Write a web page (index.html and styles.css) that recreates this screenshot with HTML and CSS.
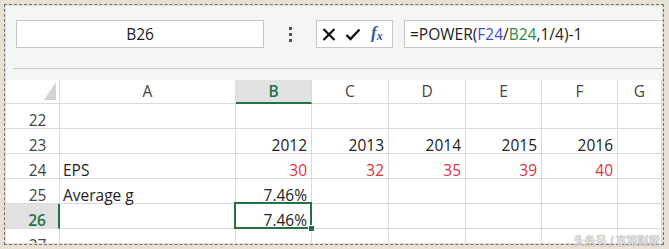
FILE: index.html
```html
<!DOCTYPE html>
<html lang="en">
<head>
    <meta charset="UTF-8">
    <title>Excel - POWER growth</title>
    <link rel="stylesheet" href="styles.css">
</head>
<body>
    <div class="frame">
        <div class="app">
            <!-- Name box + formula bar -->
            <div class="toolbar">
                <div class="name-box">B26</div>
                <div class="more"><span></span><span></span><span></span></div>
                <div class="fx-box">
                    <svg class="icon-x" width="14" height="13" viewBox="0 0 14 13">
                        <path d="M1.5 1 L12.5 12 M12.5 1 L1.5 12" stroke="#111" stroke-width="2.2" fill="none"/>
                    </svg>
                    <svg class="icon-check" width="16" height="13" viewBox="0 0 16 13">
                        <path d="M1.5 7 L5.5 11 L14.5 1.5" stroke="#111" stroke-width="2.4" fill="none"/>
                    </svg>
                    <span class="fx">f<sub>x</sub></span>
                </div>
                <div class="formula">=POWER(<span class="ref-f">F24</span>/<span class="ref-b">B24</span>,1/4)-1</div>
            </div>
            <div class="divider"></div>

            <!-- Sheet -->
            <div class="sheet">
                <div class="hd corner">
                    <svg width="12" height="18" viewBox="0 0 12 18"><polygon points="12,0 12,18 0,18" fill="#d4d4d4"/></svg>
                </div>
                <div class="hd">A</div>
                <div class="hd col-active">B</div>
                <div class="hd">C</div>
                <div class="hd">D</div>
                <div class="hd">E</div>
                <div class="hd">F</div>
                <div class="hd">G</div>

                <div class="rn">22</div>
                <div class="c"></div><div class="c"></div><div class="c"></div><div class="c"></div><div class="c"></div><div class="c"></div><div class="c"></div>

                <div class="rn">23</div>
                <div class="c"></div>
                <div class="c num">2012</div>
                <div class="c num">2013</div>
                <div class="c num">2014</div>
                <div class="c num">2015</div>
                <div class="c num">2016</div>
                <div class="c"></div>

                <div class="rn">24</div>
                <div class="c">EPS</div>
                <div class="c num red">30</div>
                <div class="c num red">32</div>
                <div class="c num red">35</div>
                <div class="c num red">39</div>
                <div class="c num red">40</div>
                <div class="c"></div>

                <div class="rn">25</div>
                <div class="c">Average g</div>
                <div class="c num">7.46%</div>
                <div class="c"></div><div class="c"></div><div class="c"></div><div class="c"></div><div class="c"></div>

                <div class="rn row-active">26</div>
                <div class="c"></div>
                <div class="c num active">7.46%</div>
                <div class="c"></div><div class="c"></div><div class="c"></div><div class="c"></div><div class="c"></div>

                <div class="rn">27</div>
                <div class="c"></div><div class="c"></div><div class="c"></div><div class="c"></div><div class="c"></div><div class="c"></div><div class="c"></div>
            </div>
        </div>
    </div>
    <div class="watermark">头条号 / 富策财税</div>
</body>
</html>
```

FILE: styles.css
```css
body {
    margin: 0;
    background-color: #e7e0d4;
    font-family: "Open Sans", "Noto Sans", sans-serif;
    position: relative;
    height: 249px;
    overflow: hidden;
}
.frame {
    margin: 4px 5px 4px 4px;
    border: 1px dashed #707070;
    padding: 1px;
}
.app {
    height: 237px;
    background-color: #f3f5f7;
    overflow: hidden;
}
.toolbar {
    height: 62px;
    box-sizing: border-box;
    padding: 14px 0 0 10px;
    display: flex;
    align-items: flex-start;
    white-space: nowrap;
}
.toolbar > div {
    flex-shrink: 0;
}
.name-box {
    width: 248px;
    height: 28px;
    box-sizing: border-box;
    border: 1px solid #c6c6c6;
    background-color: #fff;
    text-align: center;
    font-size: 15.5px;
    line-height: 26px;
    color: #222;
}
.more {
    width: 52px;
    height: 28px;
    display: flex;
    flex-direction: column;
    align-items: center;
    justify-content: center;
    gap: 3px;
}
.more span {
    width: 3px;
    height: 3px;
    background-color: #555;
}
.fx-box {
    width: 77px;
    height: 28px;
    box-sizing: border-box;
    border: 1px solid #c6c6c6;
    background-color: #fff;
    display: flex;
    align-items: center;
    padding-left: 5px;
}
.icon-x {
    margin-right: 9px;
}
.icon-check {
    margin-right: 10px;
}
.fx {
    font-family: "Liberation Serif", serif;
    font-style: italic;
    font-weight: bold;
    font-size: 17px;
    color: #3556b0;
    line-height: 20px;
}
.fx sub {
    font-size: 12px;
    vertical-align: -2px;
}
.formula {
    margin-left: 11px;
    width: 300px;
    height: 28px;
    box-sizing: border-box;
    border: 1px solid #c6c6c6;
    border-right: none;
    background-color: #fff;
    padding-left: 5px;
    font-size: 15.5px;
    line-height: 26px;
    color: #222;
}
.ref-f {
    color: #3b4fd0;
}
.ref-b {
    color: #2e8b44;
}
.divider {
    height: 11px;
    margin-left: 7px;
    border-top: 1px solid #c9c9c9;
}
.sheet {
    display: grid;
    grid-template-columns: 54px 176px 76px 77px 77px 76px 76px 1fr;
    grid-template-rows: 24px repeat(6, 25px);
    background-color: #fff;
    font-size: 15.5px;
    color: #222;
}
.hd, .rn, .c {
    box-sizing: border-box;
    border-right: 1px solid #dadada;
    border-bottom: 1px solid #dadada;
    white-space: nowrap;
}
.hd {
    text-align: center;
    line-height: 23px;
    color: #444;
}
.corner {
    display: flex;
    justify-content: flex-end;
    align-items: flex-end;
    padding: 0 3px 3px 0;
}
.corner svg {
    display: block;
}
.col-active {
    background-color: #e1e1e1;
    color: #217346;
    font-weight: 600;
    border-bottom: 2px solid #217346;
    line-height: 22px;
}
.rn {
    padding: 8px 0 0 10px;
    line-height: 16px;
    text-align: center;
    color: #444;
}
.row-active {
    background-color: #e1e1e1;
    color: #217346;
    font-weight: 600;
    border-right: 2px solid #217346;
}
.c {
    padding: 8px 4px 0 3px;
    line-height: 16px;
}
.num {
    text-align: right;
}
.red {
    color: #e0313b;
}
.active {
    position: relative;
}
.active::before {
    content: '';
    position: absolute;
    left: -2px;
    top: -2px;
    right: -1px;
    bottom: -1px;
    border: 2px solid #217346;
}
.active::after {
    content: '';
    position: absolute;
    right: -4px;
    bottom: -4px;
    width: 5px;
    height: 5px;
    background-color: #217346;
    border: 1px solid #fff;
}
.watermark {
    position: absolute;
    right: 9px;
    bottom: 1px;
    font-family: "Noto Sans CJK SC", sans-serif;
    font-size: 11px;
    color: rgba(255, 255, 255, 0.85);
    text-shadow: 0 0 1px #8a8a8a, 0 0 1px #8a8a8a;
}
```
